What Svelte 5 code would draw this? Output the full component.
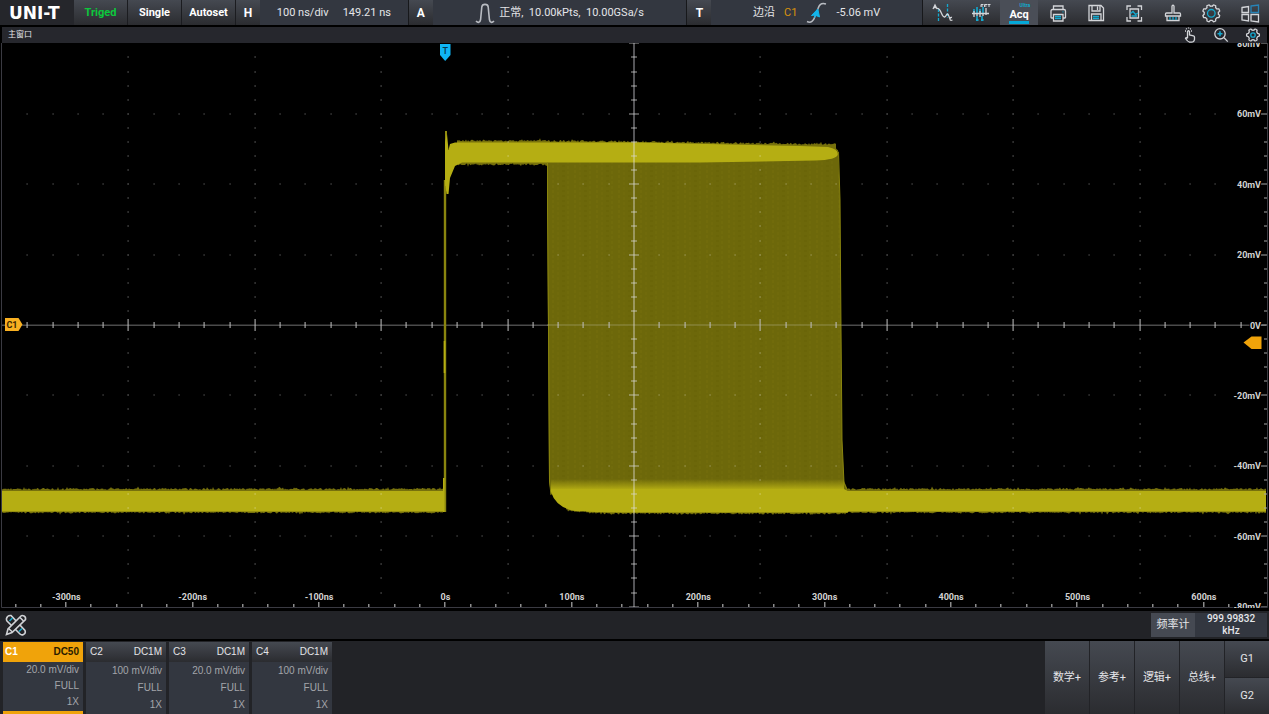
<script>
  // Deterministic noise so the trace edges look the same on every load
  let seed = 7;
  function rand() {
    seed = (seed * 16807) % 2147483647;
    return seed / 2147483647;
  }

  // Graticule: 10 divisions across, 8 down, 5 subdivisions each
  const cx = 634;
  const cy = 325;
  const dx = 126.4;
  const dy = 70.4;

  const dots = [];
  const centreX = [];
  const centreY = [];
  const rightTicks = [];
  for (let r = -3; r <= 3; r++) {
    for (let c = -24; c <= 24; c++) {
      if (r !== 0 && c !== 0) dots.push([cx + (c * dx) / 5, cy + r * dy, c % 5 === 0 ? 0.6 : 0.42]);
    }
  }
  for (let c = -4; c <= 4; c++) {
    for (let r = -19; r <= 19; r++) {
      if (c !== 0 && r % 5 !== 0) dots.push([cx + c * dx, cy + (r * dy) / 5, 0.5]);
    }
  }
  for (let c = -24; c <= 24; c++) {
    if (c !== 0) centreX.push([cx + (c * dx) / 5, c % 5 === 0 ? 6 : 3]);
  }
  for (let r = -20; r <= 20; r++) {
    if (r !== 0) centreY.push([cy + (r * dy) / 5, r % 5 === 0 ? 5 : 3]);
    rightTicks.push([cy + (r * dy) / 5, r % 5 === 0 ? 6 : 3]);
  }

  const timeTicks = [];
  for (let i = -17; i <= 32; i++) timeTicks.push([445.3 + i * 25.28, i % 5 === 0 ? 5 : 3]);
  const timeLabels = [-3, -2, -1, 0, 1, 2, 3, 4, 5, 6].map((n) => ({
    x: 445.5 + n * dx,
    text: n === 0 ? '0s' : `${n * 100}ns`
  }));
  const voltLabels = [80, 60, 40, 20, 0, -20, -40, -60, -80].map((v, i) => ({
    y: cy + (i - 4) * dy,
    text: v === 0 ? '0V' : `${v}mV`
  }));

  // Ragged fringe between two edges, each described as y(x)
  function fringe(x0, x1, top, bottom, amp) {
    const up = [];
    const down = [];
    for (let x = x0; x <= x1; x += 1) {
      const spike = rand() > 0.96 ? 1.6 : 0;
      const drop = rand() > 0.97 ? 1.4 : 0;
      up.push(`${x},${(top(x) - rand() * amp - spike).toFixed(1)}`);
      down.unshift(`${x},${(bottom(x) + rand() * amp + drop).toFixed(1)}`);
    }
    return [...up, ...down].join(' ');
  }

  const fringes = [
    fringe(2, 443, () => 489.8, () => 511.6, 1.8),
    fringe(846, 1266, () => 489.8, () => 511.6, 1.8),
    fringe(566, 846, () => 492, (x) => (x < 600 ? 509 + (x - 566) * 0.09 : 512.4), 2.2),
    fringe(457, 836, (x) => 141.6 + Math.max(0, x - 540) * 0.012, (x) => 163.6 - Math.max(0, x - 640) * 0.005, 2)
  ];

  // Rounded gear outline with a given number of lobes
  function gear(c, r, depth, lobes) {
    const pts = [];
    for (let i = 0; i < 96; i++) {
      const a = (i / 96) * Math.PI * 2;
      const w = Math.max(-1, Math.min(1, 2 * Math.cos(lobes * a + Math.PI)));
      const q = r + depth * w;
      pts.push(`${(c + q * Math.sin(a)).toFixed(2)},${(c + q * Math.cos(a)).toFixed(2)}`);
    }
    return pts.join(' ');
  }

  const channels = [
    { name: 'C1', coupling: 'DC50', scale: '20.0 mV/div', band: 'FULL', probe: '1X', active: true },
    { name: 'C2', coupling: 'DC1M', scale: '100 mV/div', band: 'FULL', probe: '1X', active: false },
    { name: 'C3', coupling: 'DC1M', scale: '20.0 mV/div', band: 'FULL', probe: '1X', active: false },
    { name: 'C4', coupling: 'DC1M', scale: '100 mV/div', band: 'FULL', probe: '1X', active: false }
  ];
  const adders = ['数学+', '参考+', '逻辑+', '总线+'];
</script>

<div class="scope">
  <header class="topbar">
    <div class="logo">UNI-T</div>
    <button class="run triged">Triged</button>
    <button class="run">Single</button>
    <button class="run">Autoset</button>
    <button class="key">H</button>
    <div class="info timebase"><span>100 ns/div</span><span>149.21 ns</span></div>
    <button class="key">A</button>
    <div class="info acquire">
      <svg width="20" height="22" viewBox="0 0 20 22" fill="none" stroke="#b9bcc2" stroke-width="1.6">
        <path d="M1 19c2 2 4 2 4.600-1.500L6.800 5C7.200 1.500 12.800 1.500 13.200 5l1.200 12.500C15 21 17 21 19 19" />
      </svg>
      <span>正常,&nbsp; 10.00kPts,&nbsp; 10.00GSa/s</span>
    </div>
    <button class="key">T</button>
    <div class="info trigger">
      <span>边沿</span><span class="source">C1</span>
      <svg width="21" height="22" viewBox="0 0 21 22" fill="none">
        <path d="M1 19.500c4 2 6.500-.5 8-5L12 6.500C13.500 2 15.500.5 20 2" stroke="#b9bcc2" stroke-width="1.500" />
        <path d="M11.800 7 5.500 13.500 9.200 13l-.7 2.500 1.500-2 3.500 1.500z" fill="#12b4ea" stroke="#12b4ea" />
      </svg>
      <span>-5.06 mV</span>
    </div>
    <nav class="tools">
      <button aria-label="Measure">
        <svg class="icon" viewBox="0 0 24 24">
          <path class="cy" d="M8.500 8v12M17.500 3v14" stroke-dasharray="3 1.500" />
          <path d="m3 8 2-4 2 4M3.500 6.500h3M7 7.500c4-1 4.500 9 7.500 8.500 2-.5 1.500-3 3-3s1.500 4.500 3 5.500M22 16.500q-2-.5-2 1.500t2.500 1" />
        </svg>
      </button>
      <button aria-label="FFT">
        <svg class="icon" viewBox="0 0 24 24">
          <path class="cy" d="M5 12V8m3 4V6m3 6V8m3 4V6M8 15v4.500m5-4.500v4.500" stroke-width="1.600" />
          <path class="cy" d="M7 19h2.500M12 19h2.500" stroke-width="2" />
          <path d="M3 12.500h17M5 10v6m3-4v3m3-5v6m3-4v3m3-8v7" />
          <path d="M12 6V3.500h2.500M12 5h2M15.500 6V3.500H18M15.500 5h2M18.500 3.500h3M20 3.500V6" stroke-width="1" />
        </svg>
      </button>
      <button class="acq" aria-label="Acquire"><small>Ultra</small><b>Acq</b></button>
      <button aria-label="Print">
        <svg class="icon" viewBox="0 0 24 24">
          <path d="M7.500 8V5h9.500v3M7.500 17H5.500Q5 17 5 16.500V10q0-1.500 1.500-1.500H18q1.500 0 1.500 1.500v6.500q0 .5-.5.500h-2M7.500 13.500H17V20H7.500z" />
          <path class="cy" d="M9 15.500h6M9 17.500h6M16.500 10.800h1" />
        </svg>
      </button>
      <button aria-label="Save">
        <svg class="icon" viewBox="0 0 24 24">
          <path d="M5 4.500h12l2.500 2.500v12.500H5zM8 5v5h8V5M13.500 5.500V9M7.500 19v-6h9.500v6" />
          <path class="cy" d="M9 15.500h6M9 17.500h6" />
        </svg>
      </button>
      <button aria-label="Screenshot">
        <svg class="icon" viewBox="0 0 24 24">
          <path d="M9 5H5v4M15.500 5h4v4M9 20H5v-4M15.500 20h4v-4M8 8h8.500v9H8z" />
          <path class="cy" d="m8.500 12.500 2.500-2 2.500 3 2.500-1.500M9.500 15h5.500" />
        </svg>
      </button>
      <button aria-label="Clear">
        <svg class="icon" viewBox="0 0 24 24">
          <path d="M11 12V5q1-1.500 2 0v7h5.500q1 0 1 1v2h-15v-2q0-1 1-1zM6 15v4.500h12V15" />
          <path class="cy" d="M9 16v3M12 16v3M15 16v3" />
        </svg>
      </button>
      <button aria-label="Settings">
        <svg class="icon" viewBox="0 0 24 24">
          <polygon points={gear(12.3, 7.9, 0.8, 8)} />
          <circle class="cy" cx="12.300" cy="12.300" r="3.800" />
        </svg>
      </button>
      <button aria-label="Windows">
        <svg class="icon" viewBox="0 0 24 24" stroke-width="1.200">
          <path d="M4 6.500 10.500 5.500V11.500H4zM4 13.500h6.500V20L4 19zM13 13.500h7.500V21L13 20z" />
          <path class="blue" d="M13 5 20.500 4v7.500H13z" />
        </svg>
      </button>
    </nav>
  </header>

  <div class="titlebar">
    <span>主窗口</span>
    <div class="viewtools">
      <button aria-label="Touch">
        <svg class="icon" viewBox="0 0 16 16">
          <path d="M6.500 11V4.500q1-1.500 2 0V8l4 .8q1 .3 1 1.200v2.500q-.5 2.700-3 2.700H8.500Q6.500 14.500 4.500 11.500q.5-1.500 2 0M4 4h1M10 4h1M5 1.500l.7.700M9.800 1.500l-.7.700M7.500.5v1" />
        </svg>
      </button>
      <button aria-label="Zoom">
        <svg class="icon" viewBox="0 0 16 16">
          <circle cx="7" cy="6.800" r="5.200" /><path d="m11 10.800 3.800 3.800" />
          <path class="cy" d="M7 4.300v5M4.500 6.800h5" stroke-width="1.600" />
        </svg>
      </button>
      <button aria-label="View settings">
        <svg class="icon" viewBox="0 0 16 16">
          <polygon points={gear(8, 5.6, 0.8, 6)} />
          <circle class="cy" cx="8" cy="8" r="2.200" />
        </svg>
      </button>
    </div>
  </div>

  <svg class="plot" viewBox="0 43 1269 566" role="img" aria-label="C1">
    <defs>
      <pattern id="grain" width="22" height="5" patternUnits="userSpaceOnUse">
        <rect width="22" height="5" fill="#6d680a" />
        <rect x="2" width="2" height="3" fill="#716b0b" />
        <rect x="7" y="2" width="2" height="3" fill="#706a0b" />
        <rect x="12" width="3" height="2" fill="#6a6508" />
        <rect x="17" y="1" width="2" height="3" fill="#706b0b" />
      </pattern>
      <linearGradient id="lift" x1="0" y1="0" x2="0" y2="1">
        <stop offset="0" stop-color="#b5ae13" stop-opacity="0" />
        <stop offset="1" stop-color="#b5ae13" />
      </linearGradient>
    </defs>
    <rect x="0" y="43" width="1269" height="566" fill="#000" />

    <!-- horizontal axis -->
    <rect x="2" y="324.500" width="1264" height="1.500" fill="#4b4b4b" />

    <!-- trace -->
    {#each fringes as points}
      <polygon {points} fill="#77710c" />
    {/each}
    <path d="M547 162V150H838L840 200 841 330 842 440 844 481 848 490V494H551L549 481 548 330z" fill="url(#grain)" />
    <path d="M547.500 163V210L548.500 330 549.500 481 551 495M838.500 152 840 200 841 330 842 440 844 483 847 490" fill="none" stroke="#8a850e" stroke-width="1" />
    <rect x="551" y="479" width="293" height="11" fill="url(#lift)" />
    <path d="M2 491H443V511.500H2z" fill="#b5ae13" />
    <path d="M551 489H844L848 491H1266V511.500H848V512.500H640Q600 512.500 575 511 556 508 551 492z" fill="#b5ae13" />
    <path d="M445 512V180" stroke="#8a850e" stroke-width="2.400" />
    <path d="M443.800 512V478M444.500 373V341M446 186V131" stroke="#b5ae13" stroke-width="1.600" />
    <path d="M445 142 447 134 448.500 150 450 144 455 142.500H640L800 146 828 147Q838 149 838 154 837 160 815 160.500L700 162.500H462L455 166 450 178 448.500 194 446.500 194 445 182z" fill="#b5ae13" />
    <path d="M829 146Q839 147 838.500 156" fill="none" stroke="#77710c" />

    <!-- graticule over the trace -->
    {#each dots as [x, y, o]}
      <rect x={Math.round(x) - 0.500} y={Math.round(y) - 0.500} width="1.200" height="1" fill="#fff" opacity={o} />
    {/each}
    <rect x="633" y="43" width="2" height="564" fill="#e8e8f0" opacity=".36" />
    <rect x="547" y="324.500" width="294" height="1" fill="#e8e8f0" opacity=".3" />
    {#each centreX as [x, h]}
      <rect x={Math.round(x) - 0.500} y={cy - h} width="1.200" height={h * 2} fill="#bdbdbd" opacity=".85" />
    {/each}
    {#each centreY as [y, w]}
      <rect x={cx - w} y={Math.round(y) - 0.500} width={w * 2} height="1" fill="#d8d8d8" opacity=".75" />
    {/each}
    {#each rightTicks as [y, w]}
      <rect x={1267 - w} y={Math.round(y) - 0.500} width={w} height="1" fill="#a8a8a8" />
    {/each}
    {#each timeTicks as [x, h]}
      <rect x={Math.round(x) - 1} y={607 - h} width="1.500" height={h} fill="#8c8c8c" />
    {/each}

    <path d="M1.500 43V607.500H1267.500V43" fill="none" stroke="#3a3a42" />

    <g class="scale" text-anchor="middle">
      {#each timeLabels as label}
        <text x={label.x} y="600">{label.text}</text>
      {/each}
    </g>
    <g class="scale" text-anchor="end">
      {#each voltLabels as label}
        <text x="1261" y={label.y + 3.500}>{label.text}</text>
      {/each}
    </g>
    <rect x="0" y="608" width="1269" height="2" fill="#000" />

    <!-- trigger position, channel offset and trigger level markers -->
    <path d="M440 44h10.500v11L445.200 61 440 55z" fill="#0fb5f5" />
    <text class="mark" x="445.200" y="53.500" fill="#04364d">T</text>
    <path d="M5 318h13.500l4 6.500-4 6.500H5z" fill="#f9b021" />
    <text class="mark bold" x="12" y="328" fill="#3a2600">C1</text>
    <path d="M1261.500 336.500h-10l-8 6 8 6.500h10z" fill="#f0a30a" />
  </svg>

  <div class="toolrow">
    <button class="edit" aria-label="Tools">
      <svg width="22" height="22" viewBox="0 0 22 22" fill="none" stroke="#d0d2d6" stroke-width="1.600">
        <path d="M1.500 4.500q1-3.500 4.500-3L20 16.500q1 3-1.500 4-2 1-3.500-.5L2 7q-.7-1-.5-2.500z" />
        <path d="M16 2q1-1 3 0t1.500 3.500L7 18.500l-5.500 2L3 15z" fill="#222327" />
        <path d="m4.500 7 3-3M14 17.500l3-3" stroke="#14a5c8" />
        <path d="m15 3.500 3.500 3.500M3.500 14.500 7.500 18" />
      </svg>
    </button>
    <dl class="counter">
      <dt>频率计</dt>
      <dd>999.99832<br />kHz</dd>
    </dl>
  </div>

  <footer class="bottom">
    <div class="channels">
      {#each channels as ch}
        <button class="channel" class:active={ch.active}>
          <span class="head"><b>{ch.name}</b><b>{ch.coupling}</b></span>
          <span class="body"><span>{ch.scale}</span><span>{ch.band}</span><span>{ch.probe}</span></span>
        </button>
      {/each}
    </div>
    <div class="adders">
      {#each adders as label}
        <button>{label}</button>
      {/each}
      <div class="groups"><button>G1</button><button>G2</button></div>
    </div>
  </footer>
</div>

<style>
  :global(body) {
    margin: 0;
    background: #000;
  }
  .scope {
    display: flex;
    flex-direction: column;
    background: #000;
    color: #e4e5e8;
    font: 11px/14px Roboto, 'Noto Sans CJK SC', sans-serif;
  }
  button {
    margin: 0;
    padding: 0;
    border: 0;
    background: none;
    color: inherit;
    font: inherit;
  }
  .topbar {
    display: flex;
    height: 25px;
    background: #25262b;
  }
  .logo {
    flex: none;
    box-sizing: border-box;
    width: 74px;
    padding-left: 9px;
    color: #fff;
    font: bold 17px/26px 'DejaVu Sans', sans-serif;
  }
  .run,
  .key,
  .tools {
    background: linear-gradient(#454951, #2b2c30);
  }
  .run {
    flex: none;
    box-sizing: border-box;
    width: 54px;
    border-right: 1px solid #1b1c20;
    color: #fff;
    font-weight: 700;
  }
  .triged {
    color: #0cc83c;
  }
  .key {
    flex: none;
    width: 24px;
    color: #fff;
    font: 700 12px/14px Roboto, sans-serif;
  }
  .info {
    display: flex;
    flex: 1 1 0;
    align-items: center;
    justify-content: center;
    border-right: 1px solid #17181b;
    background: #333740;
    white-space: nowrap;
  }
  .timebase {
    flex-grow: 148;
    gap: 14px;
  }
  .acquire {
    flex-grow: 254;
    gap: 4px;
  }
  .trigger {
    flex-grow: 211;
    gap: 9px;
  }
  .source {
    color: #d8930c;
  }
  .tools {
    display: flex;
    flex: none;
    width: 346px;
  }
  .tools button {
    display: flex;
    flex: 1;
    align-items: center;
    justify-content: center;
  }
  .icon {
    width: 24px;
    height: 24px;
    fill: none;
    stroke: #d3d5d9;
    stroke-width: 1.3;
  }
  .cy {
    stroke: #14a9cf;
  }
  .blue {
    stroke: #2784b8;
  }
  .tools .acq {
    flex-direction: column;
    justify-content: flex-end;
    background: #4a4e57;
    color: #fff;
  }
  .acq small {
    align-self: flex-end;
    padding-right: 8px;
    color: #14a9cf;
    font: 700 5px/5px Roboto, sans-serif;
  }
  .acq b {
    width: 20px;
    margin-bottom: 1px;
    border-bottom: 3px solid #05a8d8;
    font: 700 11px/13px Roboto, sans-serif;
  }
  .titlebar {
    display: flex;
    align-items: center;
    justify-content: space-between;
    height: 16px;
    margin: 2px 2px 0;
    padding: 0 6px;
    background: #26272d;
    font-size: 8px;
  }
  .viewtools {
    display: flex;
    gap: 16px;
  }
  .viewtools button,
  .viewtools .icon {
    display: block;
    width: 16px;
    height: 16px;
  }
  .plot {
    display: block;
    width: 100%;
    height: auto;
  }
  .scale {
    fill: #d2d2d2;
    font: 700 9px Roboto, sans-serif;
    stroke: #000;
    stroke-width: 2px;
    paint-order: stroke;
  }
  .mark {
    font: 500 9px Roboto, sans-serif;
    text-anchor: middle;
  }
  .bold {
    font-weight: 700;
  }
  .toolrow {
    display: flex;
    justify-content: space-between;
    align-items: center;
    height: 28px;
    margin-top: 2px;
    padding: 0 2px 0 5px;
    background: #222327;
  }
  .edit svg {
    display: block;
  }
  .counter {
    display: flex;
    align-items: stretch;
    height: 24px;
    margin: 0;
  }
  .counter dt {
    width: 44px;
    background: #454952;
    line-height: 24px;
    text-align: center;
  }
  .counter dd {
    width: 72px;
    margin: 0;
    background: #333740;
    font: 500 10px/12px Roboto, sans-serif;
    text-align: center;
  }
  .bottom {
    display: flex;
    justify-content: space-between;
    height: 73px;
    margin-top: 2px;
    background: #222327;
  }
  .channels {
    display: flex;
    gap: 3px;
    padding: 1px 0 0 3px;
    font: 10px/16px 'Liberation Sans', sans-serif;
  }
  .channel {
    display: flex;
    flex-direction: column;
    width: 80px;
    background: #333740;
  }
  .head {
    display: flex;
    align-self: stretch;
    justify-content: space-between;
    padding: 0 4px;
    background: linear-gradient(#454951, #2b2c30);
    line-height: 20px;
  }
  .head b {
    font-weight: 400;
  }
  .body {
    display: flex;
    flex: 1;
    flex-direction: column;
    align-self: stretch;
    padding-right: 4px;
    color: #a3a5aa;
    line-height: 17px;
    text-align: right;
  }
  .active {
    border-bottom: 3px solid #f0a30a;
  }
  .active .head {
    padding: 0 4px 0 2px;
    background: #f0a30a;
    color: #2a1c00;
  }
  .active .head b {
    font-weight: 700;
  }
  .active .head b:first-child {
    color: #fff;
  }
  .active .body {
    line-height: 16px;
  }
  .adders {
    display: flex;
    gap: 1px;
  }
  .adders button {
    width: 44px;
    background: linear-gradient(#454951, #2b2c30);
  }
  .groups {
    display: flex;
    flex-direction: column;
    gap: 1px;
  }
  .groups button {
    flex: 1;
  }
</style>
